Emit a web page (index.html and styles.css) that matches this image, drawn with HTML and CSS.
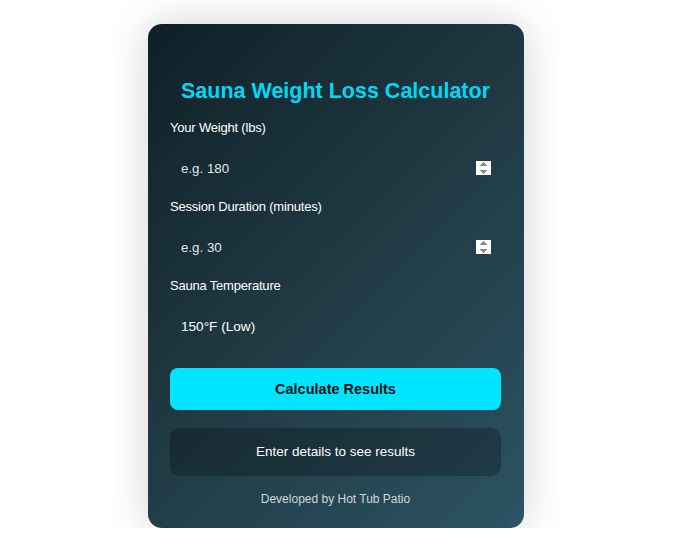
FILE: index.html
```html
<!DOCTYPE html>
<html lang="en">
<head>
    <meta charset="UTF-8">
    <title>Sauna Weight Loss Calculator</title>
    <link rel="stylesheet" href="styles.css">
</head>
<body>
<div class="wrap">
    <div class="card">
        <h2 class="title">Sauna Weight Loss Calculator</h2>

        <label class="label" for="weight">Your Weight (lbs)</label>
        <input class="field" type="number" id="weight" placeholder="e.g. 180">

        <label class="label" for="duration">Session Duration (minutes)</label>
        <input class="field" type="number" id="duration" placeholder="e.g. 30">

        <label class="label" for="temp">Sauna Temperature</label>
        <select class="field select" id="temp">
            <option value="150">150°F (Low)</option>
            <option value="175">175°F (Medium)</option>
            <option value="200">200°F (High)</option>
        </select>

        <button class="btn" type="button">Calculate Results</button>

        <div class="result">Enter details to see results</div>

        <p class="credit">Developed by Hot Tub Patio</p>
    </div>
</div>
</body>
</html>
```

FILE: styles.css
```css
*{
    box-sizing:border-box;
}
body{
    margin:0;
    background:#fff;
    font-family:"Liberation Sans", Arial, sans-serif;
}
.wrap{
    display:flex;
    justify-content:center;
    padding:24px 16px 0 0;
}
.card{
    width:376px;
    padding:22px 23px 22px 22px;
    border-radius:14px;
    background:linear-gradient(135deg, #0f2027, #203a43, #2c5364);
    box-shadow:0 0 40px rgba(0,0,0,0.18);
    color:#fff;
}
.title{
    margin:34px 0 17px;
    font-size:21.5px;
    line-height:23px;
    font-weight:bold;
    text-align:center;
    color:#00d9f5;
}
.label{
    display:block;
    font-size:13px;
    letter-spacing:-0.2px;
    line-height:16px;
    margin-bottom:12px;
}
.field{
    display:block;
    width:100%;
    height:40px;
    margin-bottom:11px;
    padding:0 10px 0 11px;
    border:none;
    border-radius:8px;
    background:transparent;
    color:#fff;
    font-family:"Liberation Sans", Arial, sans-serif;
    font-size:13.33px;
    outline:none;
}
.field::placeholder{
    color:#e6e6e6;
}
.field::-webkit-inner-spin-button{
    opacity:1;
}
.select{
    -webkit-appearance:none;
    appearance:none;
    font-size:13.6px;
}
.select option{
    color:#000;
}
.btn{
    display:block;
    width:100%;
    height:42px;
    margin-top:22px;
    border:none;
    border-radius:8px;
    background:#00e5ff;
    color:#111;
    font-family:"Liberation Sans", Arial, sans-serif;
    font-size:14.5px;
    font-weight:bold;
    cursor:pointer;
}
.result{
    margin-top:18px;
    height:48px;
    line-height:48px;
    border-radius:10px;
    background:rgba(0,0,0,0.25);
    text-align:center;
    font-size:13.5px;
}
.credit{
    margin:16px 0 0;
    font-size:12px;
    line-height:14px;
    text-align:center;
    color:#d0d6d9;
}
```
